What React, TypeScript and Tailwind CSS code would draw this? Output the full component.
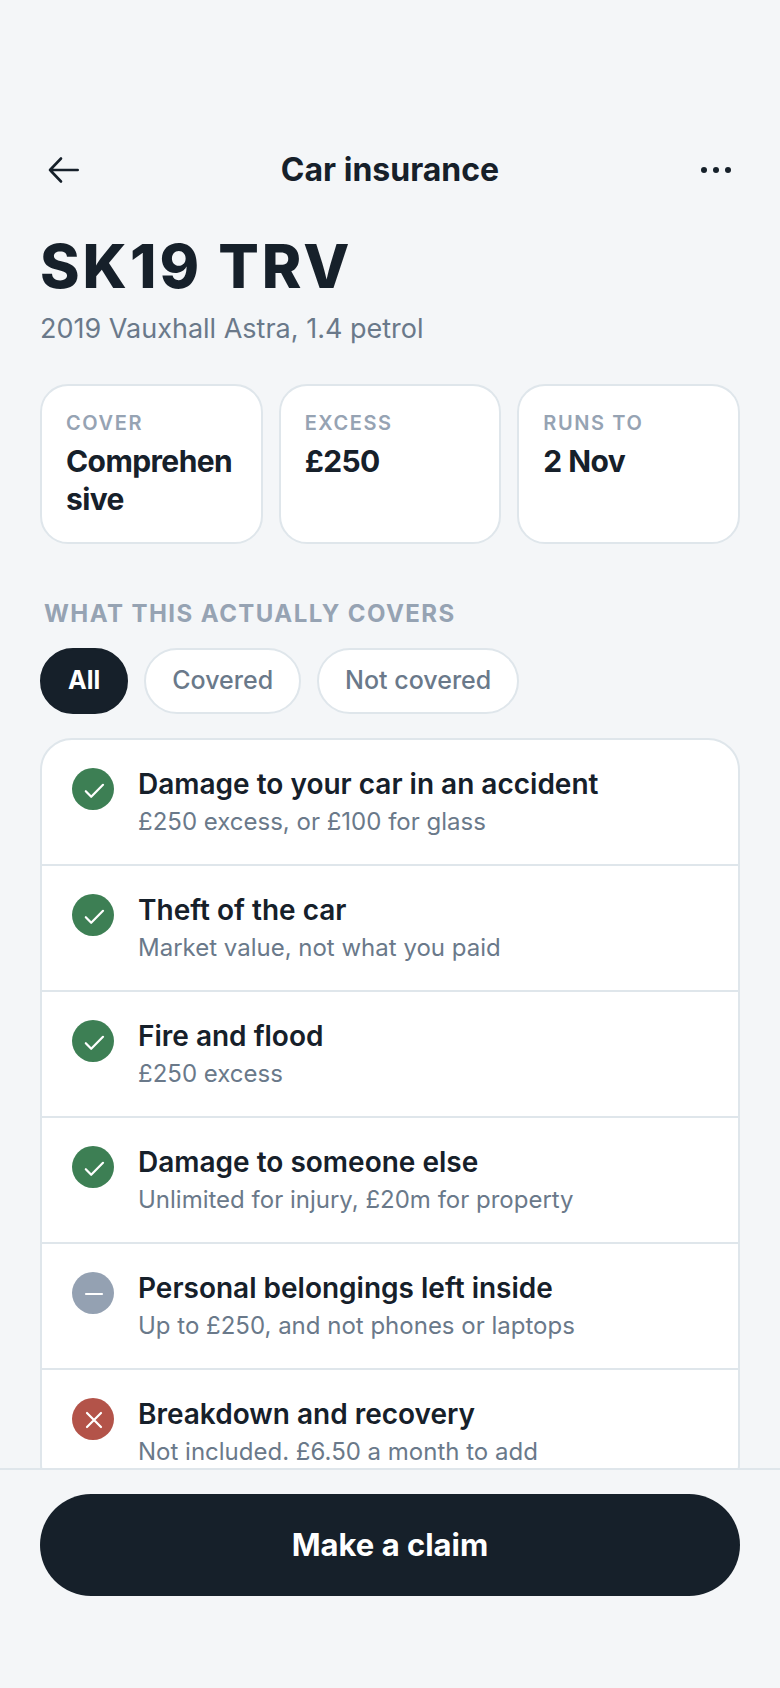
import { useState } from "react";

type Status = "covered" | "partial" | "excluded";
type Filter = "All" | "Covered" | "Not covered";

interface CoverItem {
  title: string;
  detail: string;
  status: Status;
}

const facts = [
  { label: "Cover", value: "Comprehensive" },
  { label: "Excess", value: "£250" },
  { label: "Runs to", value: "2 Nov" },
];

const filters: Filter[] = ["All", "Covered", "Not covered"];

const items: CoverItem[] = [
  {
    title: "Damage to your car in an accident",
    detail: "£250 excess, or £100 for glass",
    status: "covered",
  },
  {
    title: "Theft of the car",
    detail: "Market value, not what you paid",
    status: "covered",
  },
  { title: "Fire and flood", detail: "£250 excess", status: "covered" },
  {
    title: "Damage to someone else",
    detail: "Unlimited for injury, £20m for property",
    status: "covered",
  },
  {
    title: "Personal belongings left inside",
    detail: "Up to £250, and not phones or laptops",
    status: "partial",
  },
  {
    title: "Breakdown and recovery",
    detail: "Not included. £6.50 a month to add",
    status: "excluded",
  },
];

const badgeColor = {
  covered: "bg-[#3d7f54]",
  partial: "bg-[#94a1b2]",
  excluded: "bg-[#b35349]",
};

const badgePath = {
  covered: "M13.8 23.2l5.4 5.6L31 16.8",
  partial: "M14 22h16",
  excluded: "M15 15l14 14M29 15L15 29",
};

function StatusBadge({ status }: { status: Status }) {
  return (
    <span
      className={`flex size-[42px] shrink-0 items-center justify-center rounded-full ${badgeColor[status]}`}
    >
      <svg
        viewBox="0 0 42 42"
        className="size-[42px]"
        fill="none"
        stroke="white"
        strokeWidth="2.2"
        strokeLinecap="round"
        strokeLinejoin="round"
        aria-hidden="true"
      >
        <path d={badgePath[status]} />
      </svg>
    </span>
  );
}

export default function App() {
  const [filter, setFilter] = useState<Filter>("All");

  const visible = items.filter((item) => {
    if (filter === "All") return true;
    return filter === "Covered"
      ? item.status === "covered"
      : item.status !== "covered";
  });

  return (
    <div className="flex h-screen flex-col bg-[#f4f6f8] font-['Inter',sans-serif] text-[#16202a]">
      <main className="min-h-0 flex-1 overflow-hidden px-10 pt-[126px]">
        {/* Top bar */}
        <header className="flex h-[88px] items-center justify-between">
          <button type="button" aria-label="Back" className="p-1">
            <svg
              viewBox="0 0 40 40"
              className="size-10"
              fill="none"
              stroke="currentColor"
              strokeWidth="2.6"
              strokeLinecap="round"
              strokeLinejoin="round"
            >
              <path d="M33.7 20H6M17 8.5L6 20l11 11.5" />
            </svg>
          </button>
          <h1 className="text-[32px] font-bold">Car insurance</h1>
          <button type="button" aria-label="More options" className="p-1">
            <svg viewBox="0 0 40 40" className="size-10" fill="currentColor">
              <circle cx="8" cy="20" r="3" />
              <circle cx="20" cy="20" r="3" />
              <circle cx="32" cy="20" r="3" />
            </svg>
          </button>
        </header>

        {/* Vehicle */}
        <h2 className="mt-4 text-[60px] leading-[72px] font-extrabold tracking-wider">
          SK19 TRV
        </h2>
        <p className="mt-2 text-[27px] leading-[38px] text-[#6a798a]">
          2019 Vauxhall Astra, 1.4 petrol
        </p>

        <dl className="mt-9 grid grid-cols-3 gap-4">
          {facts.map((fact) => (
            <div
              key={fact.label}
              className="rounded-[28px] border-2 border-[#dfe6eb] bg-white p-6"
            >
              <dt className="text-[20px] leading-[26px] font-semibold tracking-[0.08em] text-[#96a3b3] uppercase">
                {fact.label}
              </dt>
              <dd className="mt-1.5 text-[30px] leading-[38px] font-bold tracking-[-0.02em] break-all">
                {fact.value}
              </dd>
            </div>
          ))}
        </dl>

        {/* What is covered */}
        <h3 className="mt-14 px-1 text-[24px] leading-[28px] font-bold tracking-[0.06em] text-[#96a3b3] uppercase">
          What this actually covers
        </h3>

        <div className="mt-5 flex gap-4">
          {filters.map((name) => (
            <button
              key={name}
              type="button"
              aria-pressed={filter === name}
              onClick={() => setFilter(name)}
              className={`h-[66px] rounded-full border-2 px-[26px] text-[25px] ${
                filter === name
                  ? "border-[#16202a] bg-[#16202a] font-bold text-white"
                  : "border-[#dfe6eb] bg-white font-medium text-[#6a798a]"
              }`}
            >
              {name}
            </button>
          ))}
        </div>

        <ul className="mt-6 divide-y-2 divide-[#dfe6eb] rounded-[32px] border-2 border-[#dfe6eb] bg-white">
          {visible.map((item) => (
            <li key={item.title} className="flex gap-6 px-[30px] pt-7 pb-[26px]">
              <StatusBadge status={item.status} />
              <div>
                <p className="text-[28px] leading-[32px] font-semibold">
                  {item.title}
                </p>
                <p className="mt-1.5 text-[24px] leading-[32px] text-[#6a798a]">
                  {item.detail}
                </p>
              </div>
            </li>
          ))}
        </ul>
      </main>

      <footer className="shrink-0 border-t-2 border-[#dfe6eb] px-10 pt-6 pb-[92px]">
        <button
          type="button"
          className="h-[102px] w-full rounded-full bg-[#16202a] text-[31px] font-bold text-white"
        >
          Make a claim
        </button>
      </footer>
    </div>
  );
}
